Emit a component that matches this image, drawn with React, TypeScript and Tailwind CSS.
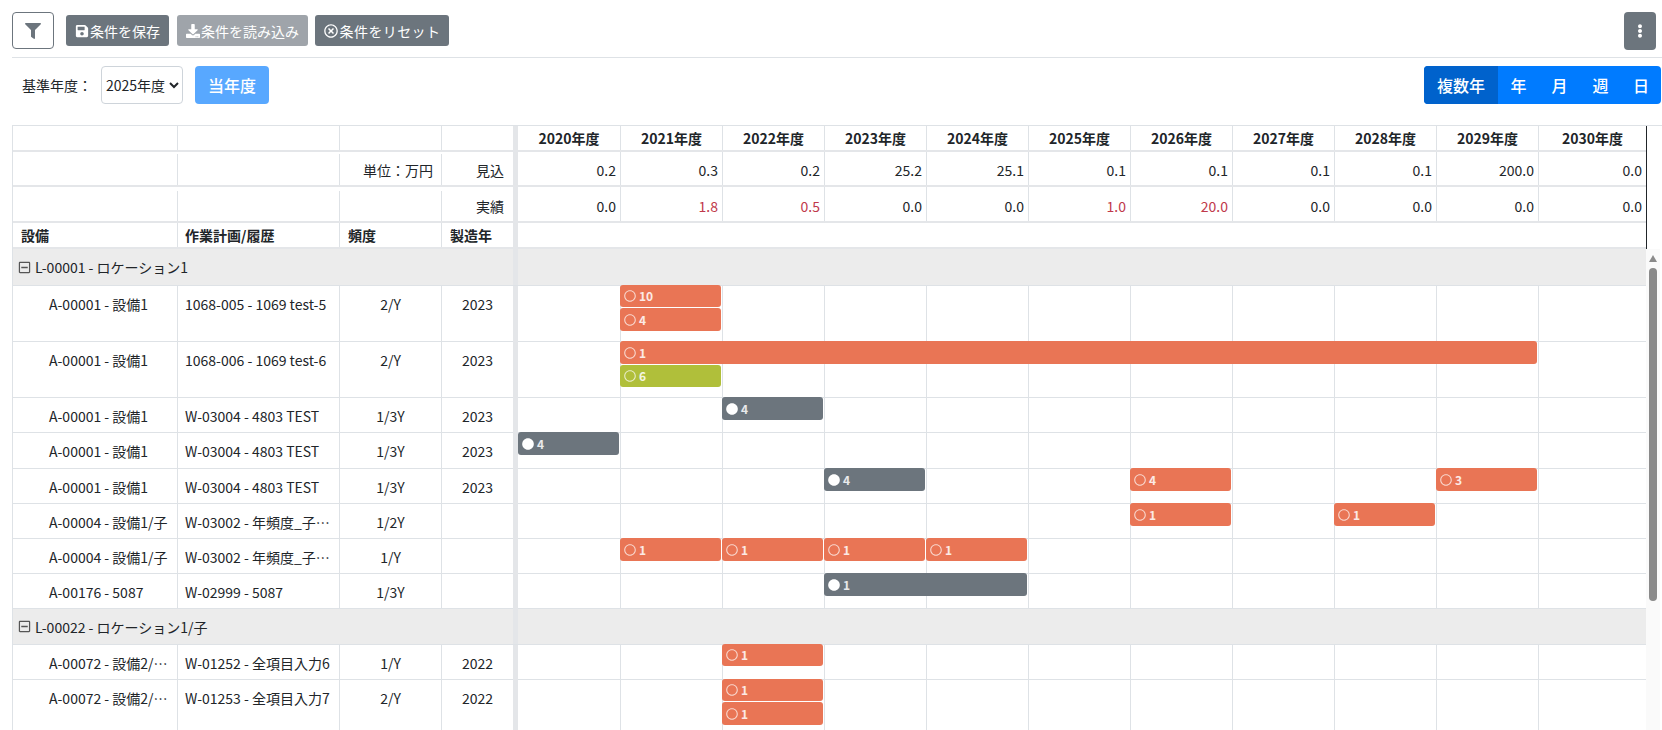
import React from "react";
import { FaFilter, FaSave, FaDownload, FaRegTimesCircle, FaEllipsisV, FaRegMinusSquare, FaRegCircle, FaCircle } from "react-icons/fa";

const FONT = '"Noto Sans CJK JP", "Noto Sans", sans-serif';
const years = [2020, 2021, 2022, 2023, 2024, 2025, 2026, 2027, 2028, 2029, 2030];
const plan = ["0.2", "0.3", "0.2", "25.2", "25.1", "0.1", "0.1", "0.1", "0.1", "200.0", "0.0"];
const actual = ["0.0", "1.8", "0.5", "0.0", "0.0", "1.0", "20.0", "0.0", "0.0", "0.0", "0.0"];

type BarT = { c: number; span?: number; t?: number; bh?: number; kind: "o" | "g" | "d"; n: string };
type RowT = { a?: string; w?: string; f?: string; y?: string; h: number; group?: string; bars?: BarT[] };

const rows: RowT[] = [
  { group: "L-00001 - ロケーション1", h: 37 },
  { a: "A-00001 - 設備1", w: "1068-005 - 1069 test-5", f: "2/Y", y: "2023", h: 56, bars: [{ c: 1, bh: 22, kind: "o", n: "10" }, { c: 1, t: 23, kind: "o", n: "4" }] },
  { a: "A-00001 - 設備1", w: "1068-006 - 1069 test-6", f: "2/Y", y: "2023", h: 56, bars: [{ c: 1, span: 9, kind: "o", n: "1" }, { c: 1, t: 24, bh: 22, kind: "g", n: "6" }] },
  { a: "A-00001 - 設備1", w: "W-03004 - 4803 TEST", f: "1/3Y", y: "2023", h: 35, bars: [{ c: 2, kind: "d", n: "4" }] },
  { a: "A-00001 - 設備1", w: "W-03004 - 4803 TEST", f: "1/3Y", y: "2023", h: 36, bars: [{ c: 0, kind: "d", n: "4" }] },
  { a: "A-00001 - 設備1", w: "W-03004 - 4803 TEST", f: "1/3Y", y: "2023", h: 35, bars: [{ c: 3, kind: "d", n: "4" }, { c: 6, kind: "o", n: "4" }, { c: 9, kind: "o", n: "3" }] },
  { a: "A-00004 - 設備1/子", w: "W-03002 - 年頻度_子…", f: "1/2Y", h: 35, bars: [{ c: 6, kind: "o", n: "1" }, { c: 8, kind: "o", n: "1" }] },
  { a: "A-00004 - 設備1/子", w: "W-03002 - 年頻度_子…", f: "1/Y", h: 35, bars: [{ c: 1, kind: "o", n: "1" }, { c: 2, kind: "o", n: "1" }, { c: 3, kind: "o", n: "1" }, { c: 4, kind: "o", n: "1" }] },
  { a: "A-00176 - 5087", w: "W-02999 - 5087", f: "1/3Y", h: 35, bars: [{ c: 3, span: 2, kind: "d", n: "1" }] },
  { group: "L-00022 - ロケーション1/子", h: 36 },
  { a: "A-00072 - 設備2/…", w: "W-01252 - 全項目入力6", f: "1/Y", y: "2022", h: 35, bars: [{ c: 2, bh: 22, kind: "o", n: "1" }] },
  { a: "A-00072 - 設備2/…", w: "W-01253 - 全項目入力7", f: "2/Y", y: "2022", h: 56, bars: [{ c: 2, bh: 22, kind: "o", n: "1" }, { c: 2, t: 23, kind: "o", n: "1" }] },
];

function Bar({ b }: { b: BarT }) {
  const bg = b.kind === "o" ? "bg-[#e97555]" : b.kind === "g" ? "bg-[#b0bf3a]" : "bg-[#6c757d]";
  const span = b.span ?? 1;
  return (
    <div
      className={`absolute flex items-center rounded-[3px] pl-1 text-[12px] font-bold leading-none text-white/85 ${bg}`}
      style={{ left: b.c * 102, width: span * 102 - 1, top: -1 + (b.t ?? 0), height: b.bh ?? 23 }}
    >
      {b.kind === "d" ? <FaCircle className="h-3 w-3 text-white" /> : <FaRegCircle className="h-3 w-3 text-white/70" />}
      <span className="ml-[3px]">{b.n}</span>
    </div>
  );
}

function Cells() {
  return (
    <div className="flex h-full">
      {years.map((y, i) => (
        <div key={y} className={`h-full ${i === 10 ? "w-[108px]" : "w-[102px]"} ${i > 0 ? "border-l border-[#dee2e6]" : ""}`} />
      ))}
    </div>
  );
}

function BodyRow({ r }: { r: RowT }) {
  if (r.group) {
    return (
      <div className="flex shrink-0 border-b border-[#dee2e6] bg-[#ececec]" style={{ height: r.h }}>
        <div className="flex w-[500px] items-center pl-[5px]">
          <FaRegMinusSquare className="h-[13px] w-[13px] text-[#555]" />
          <span className="ml-[4px]">{r.group}</span>
        </div>
        <div className="w-[5px] bg-[#e4e6e9]" />
        <div className="w-[1128px]" />
      </div>
    );
  }
  return (
    <div className="flex shrink-0" style={{ height: r.h }}>
      <div className="w-[165px] border-r border-b border-[#dee2e6] pt-[9px] pl-[36px] whitespace-nowrap">{r.a}</div>
      <div className="w-[162px] border-r border-b border-[#dee2e6] pt-[9px] pl-[7px] whitespace-nowrap">{r.w}</div>
      <div className="w-[102px] border-r border-b border-[#dee2e6] pt-[9px] text-center">{r.f}</div>
      <div className="w-[71px] border-b border-[#dee2e6] pt-[9px] text-center">{r.y}</div>
      <div className="w-[5px] bg-[#e4e6e9]" />
      <div className="relative w-[1128px] border-b border-[#dee2e6]">
        <Cells />
        {r.bars?.map((b, i) => <Bar key={i} b={b} />)}
      </div>
    </div>
  );
}

function LeftHead({ h, unit, label, bold, cols, pad = "" }: { h: number; unit?: string; label?: string; bold?: boolean; cols?: string[]; pad?: string }) {
  const cell = "border-r border-[#dee2e6] flex items-center";
  return (
    <div className={`flex border-b-2 border-[#e4e6e9] ${pad}`} style={{ height: h }}>
      <div className={`w-[165px] pl-2 ${cell} ${bold ? "font-bold" : ""}`}>{cols?.[0]}</div>
      <div className={`w-[162px] pl-[7px] ${cell} ${bold ? "font-bold" : ""}`}>{cols?.[1]}</div>
      <div className={`w-[102px] pr-2 ${cell} ${bold ? "pl-2 font-bold" : "justify-end"}`}>{bold ? cols?.[2] : unit}</div>
      <div className={`w-[71px] ${cell} border-r-0 ${bold ? "pl-2 font-bold" : "justify-end pr-[9px]"}`}>{bold ? cols?.[3] : label}</div>
    </div>
  );
}

function Values({ vals, h, red, pad }: { vals: string[]; h: number; red?: boolean; pad: string }) {
  return (
    <div className="flex border-b-2 border-[#e4e6e9]" style={{ height: h }}>
      {vals.map((v, i) => (
        <div
          key={i}
          className={`flex items-center justify-end pr-1 ${pad} ${i === 10 ? "w-[108px]" : "w-[102px]"} ${i > 0 ? "border-l border-[#dee2e6]" : ""} ${red && v !== "0.0" ? "text-[#c0394b]" : ""}`}
        >
          {v}
        </div>
      ))}
    </div>
  );
}

export default function App() {
  const btn = "flex h-[31px] items-center rounded-[3px] bg-[#6c757d] text-[14px] text-white";
  return (
    <div className="h-[730px] w-[1662px] overflow-hidden bg-white text-[14px] leading-[18px] text-[#212529]" style={{ fontFamily: FONT }}>
      <div className="ml-3 flex h-[58px] items-center border-b border-[#dee2e6] pt-1">
        <button className="flex h-[37px] w-[42px] items-center justify-center rounded-[4px] border border-[#6c757d] bg-white text-[#6c757d]">
          <FaFilter className="h-4 w-4" />
        </button>
        <button className={`${btn} ml-3 w-[103px] justify-center gap-[1px]`}><FaSave className="h-[14px] w-[14px]" />条件を保存</button>
        <button className={`${btn} ml-2 w-[131px] justify-center gap-[1px] opacity-65`}><FaDownload className="h-[14px] w-[14px]" />条件を読み込み</button>
        <button className={`${btn} ml-[7px] w-[134px] justify-center gap-[2px]`}><FaRegTimesCircle className="h-[14px] w-[14px]" /><span className="tracking-[0.4px]">条件をリセット</span></button>
        <button className="mr-[6px] ml-auto flex h-[38px] w-[32px] items-center justify-center rounded-[4px] bg-[#6c757d] text-white">
          <FaEllipsisV className="h-[14px] w-[14px]" />
        </button>
      </div>

      <div className="mt-2 flex h-[38px] items-center pl-[22px]">
        <span className="w-[79px]">基準年度：</span>
        <select className="h-[38px] w-[82px] rounded-[4px] border border-[#ced4da] bg-white text-[14px] text-[#212529]" defaultValue="2025" style={{ fontFamily: FONT }}>
          <option value="2025">2025年度</option>
        </select>
        <button className="ml-3 h-[38px] w-[74px] rounded-[4px] bg-[#007bff] text-[16px] font-medium text-white opacity-65">当年度</button>
        <div className="mr-px ml-auto flex h-[38px] overflow-hidden rounded-[4px] bg-[#007bff] text-[16px] font-medium text-white">
          <div className="flex w-[74px] items-center justify-center bg-[#0062cc]">複数年</div>
          <div className="flex w-[41px] items-center justify-center">年</div>
          <div className="flex w-[41px] items-center justify-center">月</div>
          <div className="flex w-[41px] items-center justify-center">週</div>
          <div className="flex w-[40px] items-center justify-center">日</div>
        </div>
      </div>

      <div className="mt-[21px] ml-3 flex border-t border-l border-[#dee2e6]">
        <div className="flex w-[500px] flex-col">
          <LeftHead h={26} />
          <LeftHead h={35} unit="単位：万円" label="見込" pad="pt-[2px]" />
          <LeftHead h={36} label="実績" pad="pt-1" />
          <LeftHead h={26} bold cols={["設備", "作業計画/履歴", "頻度", "製造年"]} />
        </div>
        <div className="w-[5px] bg-[#e4e6e9]" />
        <div className="flex w-[1129px] flex-col border-r border-[#212529]">
          <div className="flex h-[26px] border-b-2 border-[#e4e6e9]">
            {years.map((y, i) => (
              <div key={y} className={`flex items-center justify-center font-bold ${i === 10 ? "w-[108px]" : "w-[102px]"} ${i > 0 ? "border-l border-[#dee2e6]" : ""}`}>
                {y}年度
              </div>
            ))}
          </div>
          <Values vals={plan} h={35} pad="pt-[2px]" />
          <Values vals={actual} h={36} red pad="pt-1" />
          <div className="h-[26px] border-b-2 border-[#e4e6e9]" />
        </div>
      </div>

      <div className="ml-3 flex h-[481px]">
        <div className="flex w-[1634px] flex-col overflow-hidden border-l border-[#dee2e6]">
          {rows.map((r, i) => <BodyRow key={i} r={r} />)}
        </div>
        <div className="flex w-[14px] flex-col items-center bg-[#fafafa] pt-[6px]">
          <svg width="8" height="7" viewBox="0 0 8 7" className="text-[#8a8a8a]"><path d="M4 0 L8 7 L0 7 Z" fill="currentColor" /></svg>
          <div className="mt-[6px] h-[333px] w-2 rounded-t-[4px] rounded-b-[4px] bg-[#8a8a8a]" />
        </div>
      </div>
    </div>
  );
}
